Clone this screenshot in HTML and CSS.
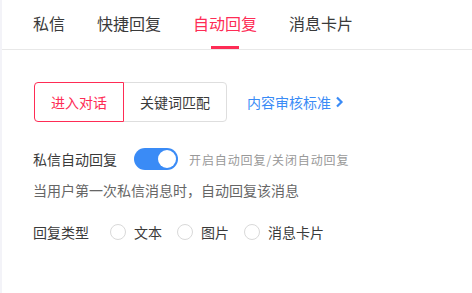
FILE: index.html
```html
<!DOCTYPE html>
<html lang="zh">
<head>
<meta charset="utf-8">
<link rel="stylesheet" href="styles.css">
</head>
<body>
<div class="page">
  <div class="tabs">
    <div class="tab">私信</div>
    <div class="tab">快捷回复</div>
    <div class="tab active">自动回复</div>
    <div class="tab">消息卡片</div>
  </div>
  <div class="content">
    <div class="mode-row">
      <div class="seg">
        <div class="seg-btn seg-active">进入对话</div>
        <div class="seg-btn seg-last">关键词匹配</div>
      </div>
      <a class="link">内容审核标准<svg class="chev" width="9" height="12" viewBox="0 0 9 12"><polyline points="2,1.5 6.5,6 2,10.5" fill="none" stroke="#3a8bf6" stroke-width="2.2"/></svg></a>
    </div>
    <div class="switch-row">
      <span class="label">私信自动回复</span>
      <span class="toggle"><span class="knob"></span></span>
      <span class="hint">开启自动回复/关闭自动回复</span>
    </div>
    <div class="desc">当用户第一次私信消息时，自动回复该消息</div>
    <div class="type-row">
      <span class="label">回复类型</span>
      <label class="radio"><span class="circle"></span>文本</label>
      <label class="radio"><span class="circle"></span>图片</label>
      <label class="radio"><span class="circle"></span>消息卡片</label>
    </div>
  </div>
</div>
</body>
</html>
```

FILE: styles.css
```css
* { box-sizing: border-box; }
html, body { margin: 0; padding: 0; background: #fff; }
body {
  font-family: "Noto Sans CJK SC", "Noto Sans", sans-serif;
  color: #333;
}
.page {
  border-left: 2px solid #f3f3f8;
  min-height: 293px;
}
.tabs {
  display: flex;
  height: 50px;
  border-bottom: 1px solid #e8e8e8;
  padding-left: 15px;
}
.tab {
  position: relative;
  padding: 14px 16px 0;
  font-size: 16px;
  line-height: 18px;
  color: #3a3a3a;
}
.tab.active { color: #fe2c55; }
.tab.active::after {
  content: "";
  position: absolute;
  left: 50%;
  bottom: 0;
  width: 28px;
  margin-left: -14px;
  height: 3px;
  background: #fe2c55;
}
.content {
  padding: 32px 0 0 31px;
}
.mode-row {
  display: flex;
  align-items: center;
}
.seg {
  display: flex;
  margin-left: 1px;
}
.seg-btn {
  height: 40px;
  padding: 0 16px;
  font-size: 14px;
  line-height: 38px;
  border: 1px solid #dedede;
  color: #3a3a3a;
  background: #fff;
}
.seg-active {
  position: relative;
  z-index: 1;
  border-color: #fe2c55;
  color: #fe2c55;
  border-radius: 4px 0 0 4px;
}
.seg-last {
  margin-left: -1px;
  border-radius: 0 4px 4px 0;
}
.link {
  margin-left: 20px;
  font-size: 14px;
  color: #3a8bf6;
  display: flex;
  align-items: center;
}
.chev { margin-left: 4px; }
.switch-row {
  display: flex;
  align-items: center;
  margin-top: 26px;
  height: 22px;
}
.label {
  font-size: 14px;
  color: #3a3a3a;
}
.toggle {
  position: relative;
  width: 44px;
  height: 22px;
  border-radius: 11px;
  background: #3a8bf6;
  margin-left: 17px;
}
.knob {
  position: absolute;
  right: 2px;
  top: 2px;
  width: 18px;
  height: 18px;
  border-radius: 50%;
  background: #fff;
}
.hint {
  margin-left: 11px;
  font-size: 12px;
  letter-spacing: 0.9px;
  color: #999;
}
.desc {
  margin-top: 10px;
  font-size: 14px;
  line-height: 20px;
  color: #666;
}
.type-row {
  display: flex;
  align-items: center;
  margin-top: 22px;
  height: 20px;
}
.radio {
  display: flex;
  align-items: center;
  font-size: 14px;
  color: #3a3a3a;
  margin-left: 15px;
}
.type-row .label + .radio { margin-left: 21px; }
.circle {
  width: 16px;
  height: 16px;
  border: 1px solid #d9d9d9;
  border-radius: 50%;
  margin-right: 8px;
}
```
